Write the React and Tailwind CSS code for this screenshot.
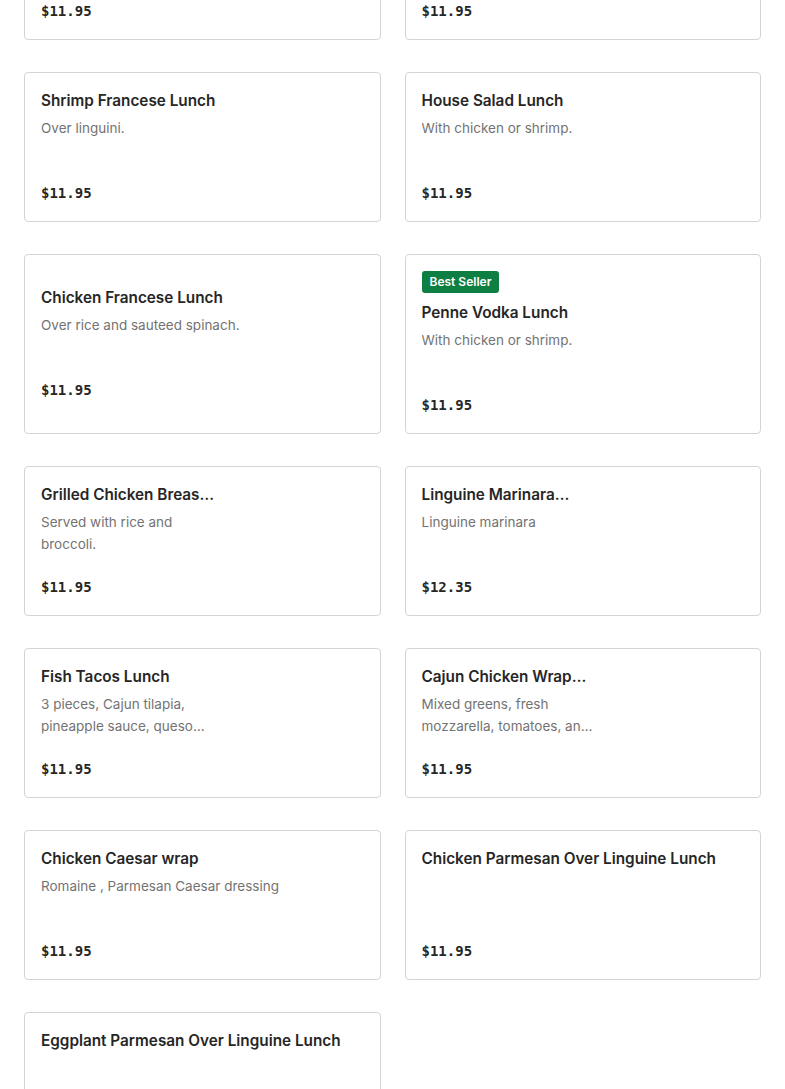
import React from "react";

const items = [
  { title: "Chicken Marsala Lunch", desc: "Over linguini.", price: "$11.95" },
  { title: "Chicken Parmesan Lunch", desc: "Over linguini.", price: "$11.95" },
  { title: "Shrimp Francese Lunch", desc: "Over linguini.", price: "$11.95" },
  { title: "House Salad Lunch", desc: "With chicken or shrimp.", price: "$11.95" },
  { title: "Chicken Francese Lunch", desc: "Over rice and sauteed spinach.", price: "$11.95" },
  { title: "Penne Vodka Lunch", desc: "With chicken or shrimp.", price: "$11.95", badge: true },
  { title: "Grilled Chicken Breast Lunch", desc: "Served with rice and broccoli.", price: "$11.95", narrow: true },
  { title: "Linguine Marinara Lunch", desc: "Linguine marinara", price: "$12.35", narrow: true },
  { title: "Fish Tacos Lunch", desc: "3 pieces, Cajun tilapia, pineapple sauce, queso fresco", price: "$11.95", narrow: true },
  { title: "Cajun Chicken Wrap Lunch", desc: "Mixed greens, fresh mozzarella, tomatoes, and ranch", price: "$11.95", narrow: true },
  { title: "Chicken Caesar wrap", desc: "Romaine , Parmesan Caesar dressing", price: "$11.95" },
  { title: "Chicken Parmesan Over Linguine Lunch", desc: "", price: "$11.95" },
  { title: "Eggplant Parmesan Over Linguine Lunch", desc: "", price: "$11.95" },
];

function Card({ item }) {
  return (
    <div className="flex flex-col justify-center rounded-[4px] border border-[#d4d4d4] bg-white px-4 py-4">
      {item.badge && (
        <div className="mb-2 flex">
          <span className="rounded-[3px] bg-[#0e7f43] px-2 text-[12px] font-semibold leading-[22px] text-white">
            Best Seller
          </span>
        </div>
      )}
      <div className="flex min-h-[116px] flex-col">
        <div
          className={
            "line-clamp-1 text-[15.3px] font-semibold leading-[24px] text-[#262626] " +
            (item.narrow ? "max-w-[176px]" : "")
          }
        >
          {item.title}
        </div>
        {item.desc && (
          <div
            className={
              "mt-1 line-clamp-2 text-[13.5px] leading-[22px] text-[#737373] " +
              (item.narrow ? "max-w-[176px]" : "")
            }
          >
            {item.desc}
          </div>
        )}
        <div
          className="mt-auto mb-[2px] text-[14px] font-bold leading-[20px] text-[#262626]"
          style={{ fontFamily: '"DejaVu Sans Mono", "Liberation Mono", monospace' }}
        >
          {item.price}
        </div>
      </div>
    </div>
  );
}

export default function App() {
  return (
    <div
      className="h-[1089px] overflow-hidden bg-white"
      style={{ fontFamily: 'Inter, "Noto Sans", Arial, sans-serif' }}
    >
      <div className="mt-[-110px] grid grid-cols-2 gap-x-6 gap-y-8 px-6">
        {items.map((it, i) => (
          <Card key={i} item={it} />
        ))}
      </div>
    </div>
  );
}
